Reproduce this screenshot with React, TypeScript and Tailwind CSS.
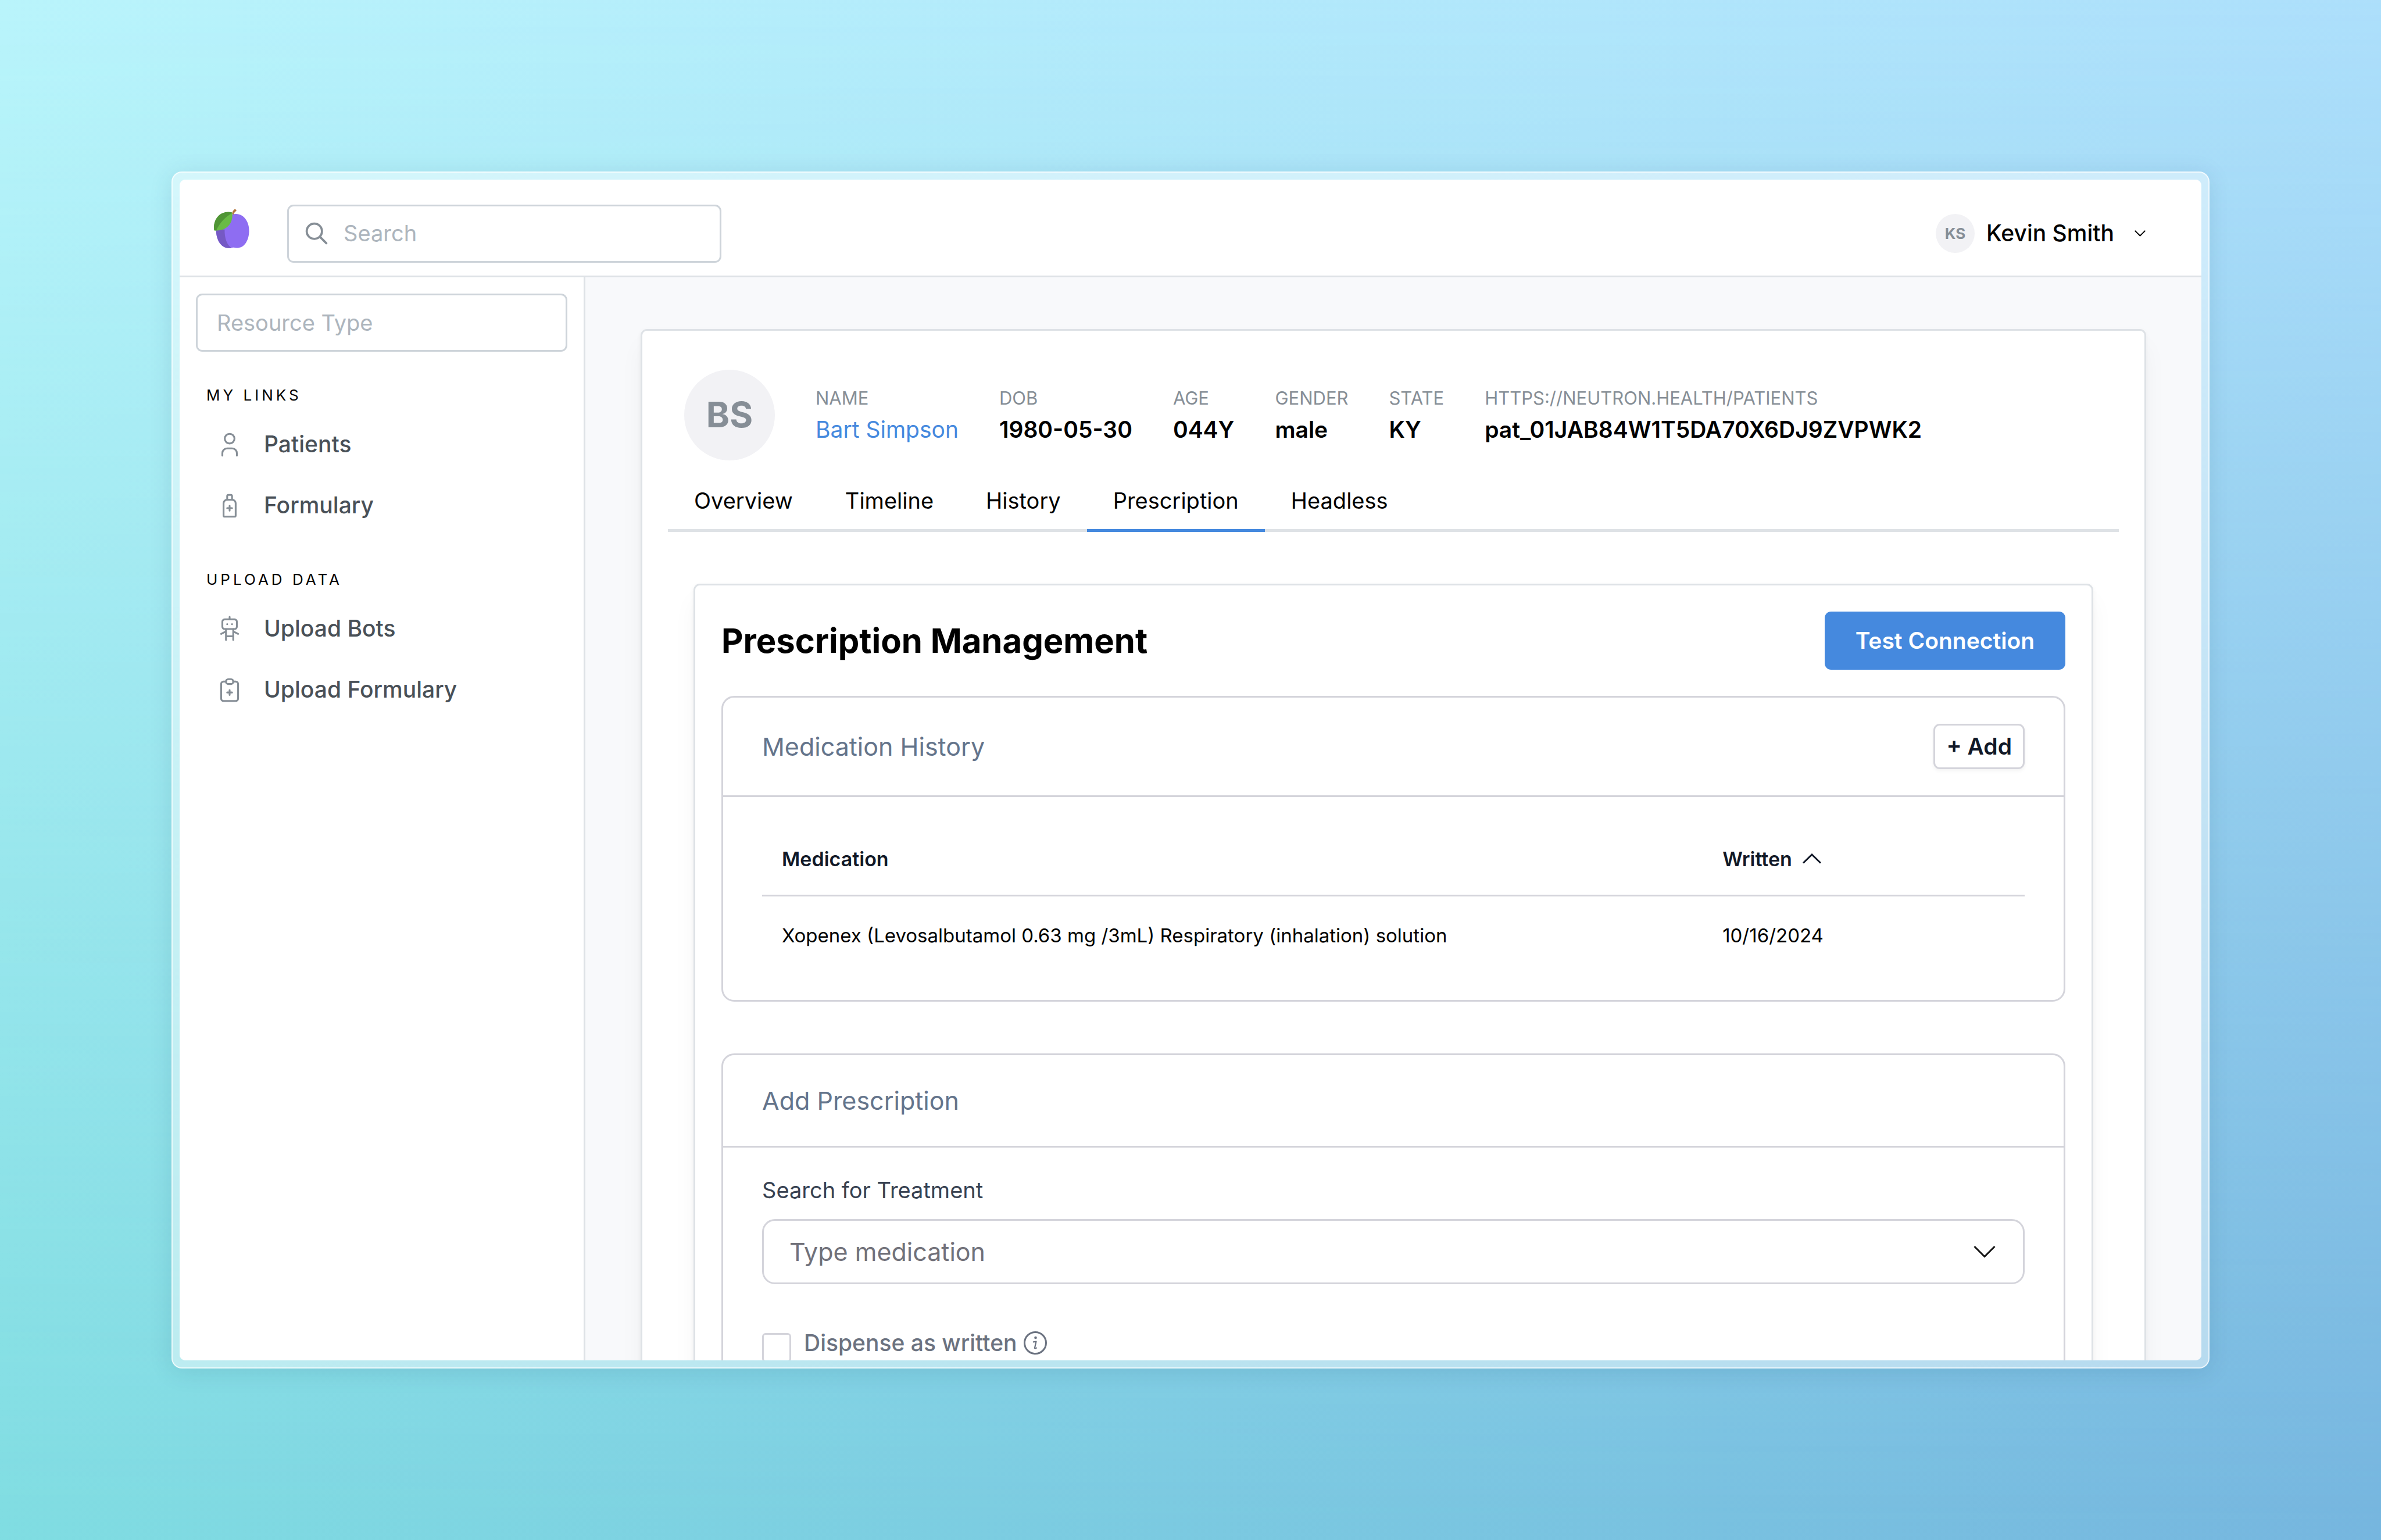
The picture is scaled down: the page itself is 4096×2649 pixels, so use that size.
import type { ReactNode } from 'react'

function TablerIcon({ children, className }: { children: ReactNode; className: string }) {
  return (
    <svg viewBox="0 0 24 24" fill="none" stroke="currentColor" strokeLinecap="round" strokeLinejoin="round" className={className} aria-hidden="true">
      {children}
    </svg>
  )
}

function PlumLogo() {
  return (
    <svg viewBox="50 50 230 250" className="h-[67px] w-[62px] shrink-0" role="img" aria-label="Home">
      <path d="M67 180 C67 120 130 78 196 80 C246 82 280 130 279 190 C278 250 248 300 200 298 C190 297 184 295 176 295 C166 295 160 299 146 299 C100 298 67 250 67 180Z" fill="#8e6df2" />
      <path d="M67 182 L122 180 C120 230 136 282 166 298 C158 299 152 300 140 298 C98 292 67 245 67 182Z" fill="#7559c4" />
      <path d="M169 77 C172 66 176 58 184 51 C190 48 199 53 197 60 C188 66 182 74 178 85Z" fill="#b5773d" />
      <path d="M170 72 C180 130 140 196 55 185 C44 110 100 54 170 72Z" fill="#69bb45" />
      <path d="M170 74 C130 96 90 135 68 186 L55 185 C44 110 100 54 168 70Z" fill="#509535" />
    </svg>
  )
}

const links = [
  {
    label: 'Patients',
    icon: (
      <>
        <path d="M8 7a4 4 0 1 0 8 0a4 4 0 0 0 -8 0" />
        <path d="M6 21v-2a4 4 0 0 1 4 -4h4a4 4 0 0 1 4 4v2" />
      </>
    ),
  },
  {
    label: 'Formulary',
    icon: (
      <>
        <path d="M8 21h8a1 1 0 0 0 1 -1v-10a3 3 0 0 0 -3 -3h-4a3 3 0 0 0 -3 3v10a1 1 0 0 0 1 1z" />
        <path d="M10 14h4M12 12v4" />
        <path d="M10 7v-3a1 1 0 0 1 1 -1h2a1 1 0 0 1 1 1v3" />
      </>
    ),
  },
]

const uploads = [
  {
    label: 'Upload Bots',
    icon: (
      <>
        <path d="M6 6a2 2 0 0 1 2 -2h8a2 2 0 0 1 2 2v4a2 2 0 0 1 -2 2h-8a2 2 0 0 1 -2 -2z" />
        <path d="M12 2v2M9 12v9M15 12v9M5 16l4 -2M15 14l4 2M9 18h6M10 8v.01M14 8v.01" />
      </>
    ),
  },
  {
    label: 'Upload Formulary',
    icon: (
      <>
        <path d="M9 5h-2a2 2 0 0 0 -2 2v12a2 2 0 0 0 2 2h10a2 2 0 0 0 2 -2v-12a2 2 0 0 0 -2 -2h-2" />
        <path d="M9 5a2 2 0 0 1 2 -2h2a2 2 0 0 1 2 2a2 2 0 0 1 -2 2h-2a2 2 0 0 1 -2 -2z" />
        <path d="M10 14h4M12 12v4" />
      </>
    ),
  },
]

function NavSection({ title, items }: { title: string; items: typeof links }) {
  return (
    <section>
      <h2 className="pl-[18px] text-[26px] leading-[42px] tracking-[5px] text-black uppercase">{title}</h2>
      <ul className="mt-[11px]">
        {items.map((item) => (
          <li key={item.label}>
            <a href="#" className="flex h-[105px] items-center gap-[34px] pl-[33px] text-[39px] font-medium text-[#495057]">
              <TablerIcon className="size-[50px] stroke-[1.5] text-[#868e96]">{item.icon}</TablerIcon>
              {item.label}
            </a>
          </li>
        ))}
      </ul>
    </section>
  )
}

function Header() {
  return (
    <header className="flex h-[168px] shrink-0 items-center border-b-[3px] border-[#dee2e6] bg-white pr-[89px] pl-[58px]">
      <a href="#" className="pt-[4px]">
        <PlumLogo />
      </a>
      <label className="ml-[65px] mt-[20px] flex h-[100px] w-[747px] items-center gap-[24px] rounded-[11px] border-[3px] border-[#ced4da] px-[25px]">
        <TablerIcon className="size-[45px] shrink-0 stroke-2 text-[#868e96]">
          <path d="M3 10a7 7 0 1 0 14 0a7 7 0 1 0 -14 0" />
          <path d="M21 21l-6 -6" />
        </TablerIcon>
        <input type="text" aria-label="Search" placeholder="Search" className="min-w-0 flex-1 text-[38px] outline-none placeholder:text-[#adb5bd]" />
      </label>
      <button type="button" className="mt-[20px] ml-auto flex items-center text-[39px] font-medium text-black">
        <span className="flex size-[67px] items-center justify-center rounded-full bg-[#f2f2f5] text-[26px] font-bold text-[#868e96]">KS</span>
        <span className="ml-[20px]">Kevin Smith</span>
        <TablerIcon className="ml-[28px] size-[33px] stroke-[1.5]">
          <path d="M6 9l6 6l6 -6" />
        </TablerIcon>
      </button>
    </header>
  )
}

const facts = [
  { label: 'Name', value: 'Bart Simpson', link: true },
  { label: 'DOB', value: '1980-05-30' },
  { label: 'Age', value: '044Y' },
  { label: 'Gender', value: 'male' },
  { label: 'State', value: 'KY' },
  { label: 'https://neutron.health/patients', value: 'pat_01JAB84W1T5DA70X6DJ9ZVPWK2' },
]

const tabs = ['Overview', 'Timeline', 'History', 'Prescription', 'Headless']

function PatientSummary() {
  return (
    <div className="flex items-center gap-[70px] px-[28px]">
      <div className="flex size-[156px] items-center justify-center rounded-full bg-[#f2f2f5] text-[61px] font-bold text-[#868e96]">BS</div>
      <dl className="flex gap-[70px] pb-[5px]">
        {facts.map((fact) => (
          <div key={fact.label}>
            <dt className="text-[31px] leading-[54px] text-[#868e96] uppercase">{fact.label}</dt>
            <dd className="text-[39px] leading-[54px] font-semibold text-black">
              {fact.link ? (
                <a href="#" className="font-normal text-[#4589de]">
                  {fact.value}
                </a>
              ) : (
                fact.value
              )}
            </dd>
          </div>
        ))}
      </dl>
    </div>
  )
}

function PatientTabs() {
  return (
    <div role="tablist" className="mt-[16px] flex border-b-[5px] border-[#dee2e6]">
      {tabs.map((tab) => {
        const active = tab === 'Prescription'
        return (
          <button
            key={tab}
            type="button"
            role="tab"
            aria-selected={active}
            className={`-mb-[5px] h-[107px] border-b-[5px] px-[45px] pt-[5px] text-[38px] text-black ${active ? 'border-[#4589de]' : 'border-transparent'}`}
          >
            {tab}
          </button>
        )
      })}
    </div>
  )
}

function MedicationHistory() {
  return (
    <section className="mt-[45px] rounded-[22px] border-[3px] border-[#d4d4db]">
      <div className="flex h-[171px] items-center justify-between border-b-[3px] border-[#d4d4db] px-[67px]">
        <h3 className="text-[43px] text-[#64748b]">Medication History</h3>
        <button type="button" className="h-[78px] rounded-[11px] border-[3px] border-[#d4d4db] px-[19px] text-[39px] font-semibold text-[#111827] shadow-[0_3px_6px_rgba(0,0,0,0.05)]">
          + Add
        </button>
      </div>
      <div className="px-[67px] pt-[45px] pb-[43px]">
        <table className="w-full table-fixed text-left text-[33px]">
          <colgroup>
            <col className="w-[74.5%]" />
            <col />
          </colgroup>
          <thead>
            <tr className="h-[124px] border-b-[3px] border-[#d4d4db] text-[34px] text-[#111827]">
              <th className="px-[34px] font-semibold">Medication</th>
              <th className="px-[34px] font-semibold">
                <span className="flex items-center gap-[18px]">
                  Written
                  <svg viewBox="0 0 32 18" fill="none" stroke="currentColor" strokeWidth="3" className="h-[18px] w-[32px]" aria-hidden="true">
                    <path d="M1 16.5L16 2L31 16.5" />
                  </svg>
                </span>
              </th>
            </tr>
          </thead>
          <tbody>
            <tr className="h-[137px] text-black">
              <td className="px-[34px]">Xopenex (Levosalbutamol 0.63 mg /3mL) Respiratory (inhalation) solution</td>
              <td className="px-[34px]">10/16/2024</td>
            </tr>
          </tbody>
        </table>
      </div>
    </section>
  )
}

function AddPrescription() {
  return (
    <section className="mt-[89px] rounded-[22px] border-[3px] border-[#d4d4db] pb-[200px]">
      <div className="flex h-[159px] items-center border-b-[3px] border-[#d4d4db] px-[67px]">
        <h3 className="text-[43px] text-[#64748b]">Add Prescription</h3>
      </div>
      <div className="px-[67px] pt-[45px]">
        <label htmlFor="treatment" className="block text-[38px] leading-[56px] text-[#374151]">
          Search for Treatment
        </label>
        <div className="mt-[22px] flex h-[112px] items-center rounded-[22px] border-[3px] border-[#d4d4db] pr-[47px] pl-[44px]">
          <input id="treatment" type="text" placeholder="Type medication" className="min-w-0 flex-1 text-[43px] outline-none placeholder:text-[#71717a]" />
          <svg viewBox="0 0 38 22" fill="none" stroke="#111" strokeWidth="3" className="h-[22px] w-[38px]" aria-hidden="true">
            <path d="M1.5 2L19 19.500L36.500 2" />
          </svg>
        </div>
        <div className="mt-[73px] flex items-start">
          <input id="daw" type="checkbox" className="mt-[11px] size-[50px] shrink-0 appearance-none rounded-[6px] border-[3px] border-[#d4d4db] bg-white" />
          <label htmlFor="daw" className="ml-[22px] text-[39px] leading-[56px] font-medium text-[#6b7280]">
            Dispense as written
          </label>
          <svg viewBox="0 0 40 40" fill="none" className="mt-[8px] ml-[11px] size-[40px]" role="img" aria-label="More information">
            <circle cx="20" cy="20" r="18.500" stroke="#6b7280" strokeWidth="3" />
            <circle cx="20.500" cy="11" r="2.300" fill="#6b7280" />
            <path d="M16.800 18.300L21.500 17.500L19 28.500Q18.800 30.500 22 28.600" stroke="#6b7280" strokeWidth="2.200" strokeLinecap="round" strokeLinejoin="round" />
          </svg>
        </div>
      </div>
    </section>
  )
}

export default function App() {
  return (
    <div className="relative isolate h-screen overflow-hidden bg-linear-to-r from-[#80dde2] to-[#76b6df] p-[295px] font-['Inter',sans-serif]">
      <div className="absolute inset-0 -z-10 bg-linear-to-r from-[#b9f4fb] to-[#addffb] [mask-image:linear-gradient(to_bottom,black,transparent)]" />
      <div className="h-full rounded-[18px] border-2 border-white/70 bg-white/45 p-[12px] shadow-[0_6px_40px_rgba(0,60,90,0.12)]">
        <div className="flex h-full flex-col overflow-hidden rounded-[10px] bg-white">
          <Header />
          <div className="flex min-h-0 flex-1">
            <nav aria-label="Main" className="flex w-[698px] shrink-0 flex-col border-r-[3px] border-[#dee2e6] bg-white p-[28px]">
              <input type="text" aria-label="Resource Type" placeholder="Resource Type" className="h-[100px] w-full rounded-[11px] border-[3px] border-[#ced4da] px-[33px] text-[38px] outline-none placeholder:text-[#adb5bd]" />
              <div className="mt-[54px] flex flex-col gap-[54px]">
                <NavSection title="My Links" items={links} />
                <NavSection title="Upload Data" items={uploads} />
              </div>
            </nav>
            <main className="min-w-0 flex-1 overflow-hidden bg-[#f8f9fb] px-[95px] pt-[89px]">
              <article className="rounded-[11px] border-[3px] border-[#dee2e6] bg-white px-[44px] pt-[67px] pb-[90px] shadow-[0_3px_8px_rgba(0,0,0,0.05),0_28px_42px_rgba(0,0,0,0.04)]">
                <PatientSummary />
                <PatientTabs />
                <section className="mx-[44px] mt-[89px] rounded-[11px] border-[3px] border-[#dee2e6] p-[45px] shadow-[0_3px_8px_rgba(0,0,0,0.05),0_28px_42px_rgba(0,0,0,0.04)]">
                  <div className="flex items-center justify-between">
                    <h1 className="text-[58px] font-bold text-black">Prescription Management</h1>
                    <button type="button" className="h-[100px] rounded-[11px] bg-[#4589de] px-[53px] text-[39px] font-semibold text-white">
                      Test Connection
                    </button>
                  </div>
                  <MedicationHistory />
                  <AddPrescription />
                </section>
              </article>
            </main>
          </div>
        </div>
      </div>
    </div>
  )
}
